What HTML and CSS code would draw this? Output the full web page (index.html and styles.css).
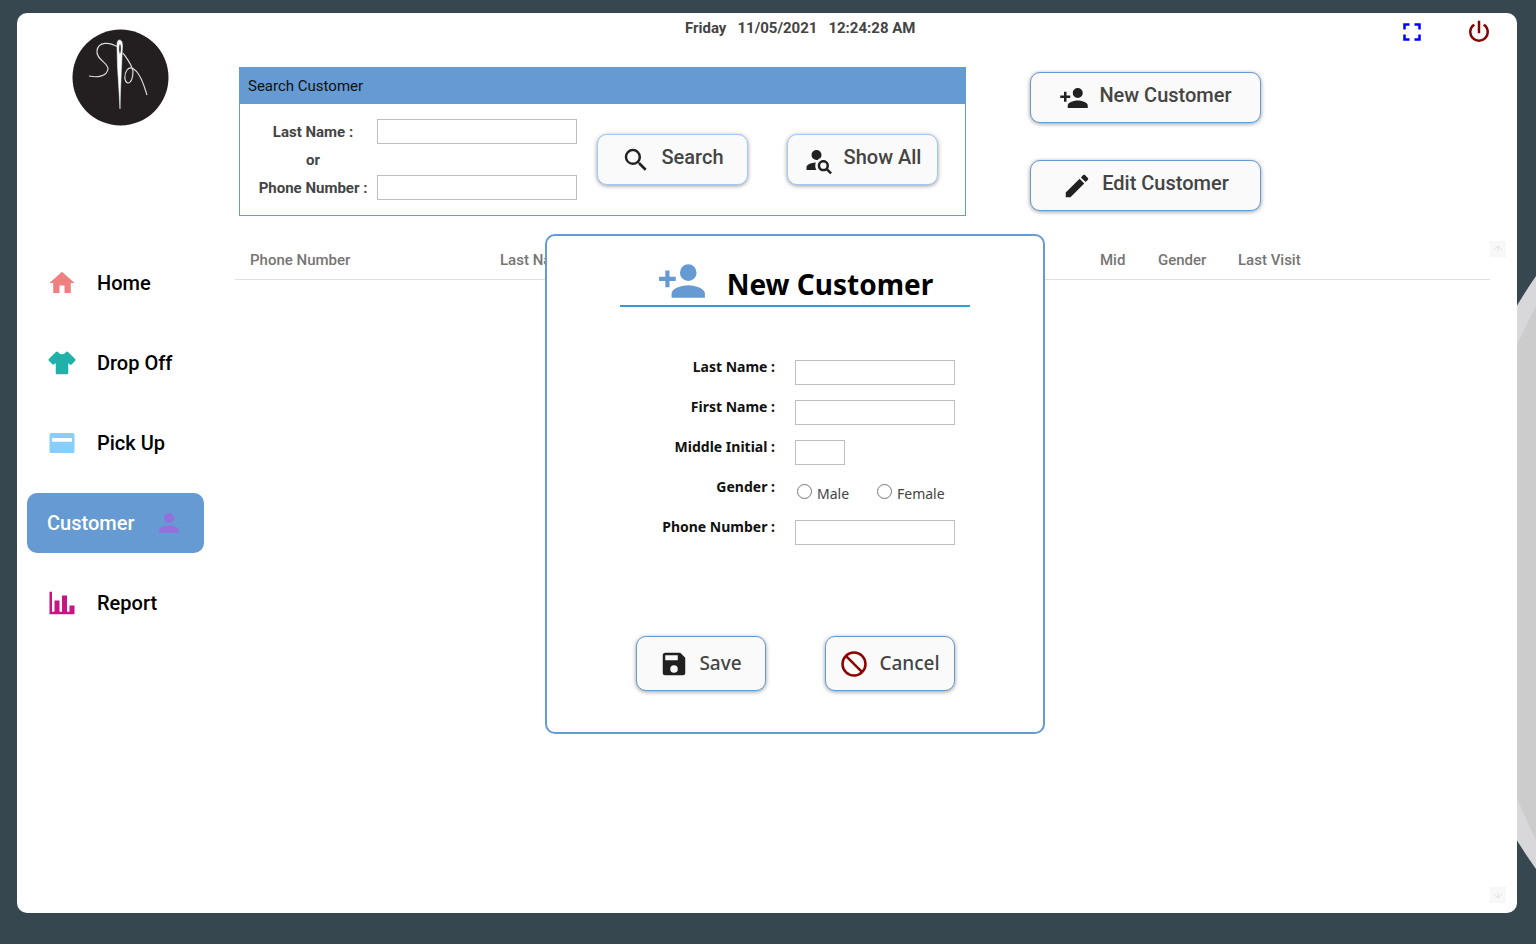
FILE: index.html
```html
<!DOCTYPE html>
<html lang="en">
<head>
<meta charset="utf-8">
<title>Customer</title>
<link rel="stylesheet" href="styles.css">
</head>
<body>
<svg class="backdrop" viewBox="0 0 40 944" aria-hidden="true">
  <path class="backdrop-outer" d="M40 276A502 502 0 0 0 0 345V803A502 502 0 0 0 40 869Z"/>
  <path class="backdrop-inner" d="M40 306A600 600 0 0 0 21 345V798A600 600 0 0 0 40 840Z"/>
</svg>
<div class="panel">
  <aside class="sidebar">
    <svg class="logo" viewBox="0 0 97 97" role="img" aria-label="Needle and thread logo">
      <circle cx="48.500" cy="48.500" r="48" fill="#231f20"/>
      <path d="M46 18C38 13 26 12 25 22C24 31 36 33 36 40C35 47 26 49 17 47M51 24C56 31 60 36 61 42C61 49 59 54 56 54C52 53 52 45 55 41C59 36 64 41 67 46C71 52 73 60 75 66" fill="none" stroke="#ddd" stroke-width="1.200"/>
      <path fill-rule="evenodd" d="M47.500 11C49.500 11 50.500 13 50.500 17L49.500 38L48.500 62L48 80L47 62L45.500 38L45 17C45 13 45.500 11 47.500 11ZM48 15C46.500 15 46.500 24 48 25C49.500 24 49.500 15 48 15Z" fill="#fff" stroke="#fff" stroke-width=".5"/>
    </svg>
    <nav class="nav">
      <a class="nav-item" href="#home"><svg class="icon home" viewBox="0 0 24 24"><path d="M10,20V14H14V20H19V12H22L12,3L2,12H5V20H10Z"/></svg><span>Home</span></a>
      <a class="nav-item" href="#drop-off"><svg class="icon shirt" viewBox="0 0 24 24"><path d="M16,21H8A1,1 0 0,1 7,20V12.07L5.7,13.07C5.31,13.46 4.68,13.46 4.29,13.07L1.46,10.29C1.07,9.9 1.07,9.27 1.46,8.88L7.34,3H9C9,4.1 10.34,5 12,5C13.66,5 15,4.1 15,3H16.66L22.54,8.88C22.93,9.27 22.93,9.9 22.54,10.29L19.71,13.12C19.32,13.5 18.69,13.5 18.3,13.12L17,12.12V20A1,1 0 0,1 16,21"/></svg><span>Drop Off</span></a>
      <a class="nav-item" href="#pick-up"><svg class="icon card" viewBox="0 0 24 24"><path fill-rule="evenodd" d="M3.500,4H20.500A1.500,1.500 0 0,1 22,5.500V18.500A1.500,1.500 0 0,1 20.500,20H3.500A1.500,1.500 0 0,1 2,18.500V5.500A1.500,1.500 0 0,1 3.500,4M4,8V11H20V8Z"/></svg><span>Pick Up</span></a>
      <a class="nav-item active" href="#customer" aria-current="page"><span>Customer</span><svg class="icon person" viewBox="0 0 24 24"><path d="M12,4A4,4 0 0,1 16,8A4,4 0 0,1 12,12A4,4 0 0,1 8,8A4,4 0 0,1 12,4M12,14C16.42,14 20,15.79 20,18V20H4V18C4,15.79 7.58,14 12,14Z"/></svg></a>
      <a class="nav-item" href="#report"><svg class="icon chart" viewBox="0 0 24 24"><path d="M22,21H2V3H4V19H6V10H10V19H12V6H16V19H18V14H22V21Z"/></svg><span>Report</span></a>
    </nav>
  </aside>
  <main class="main">
    <header class="topbar">
      <div class="clock"><span>Friday</span><span>11/05/2021</span><span>12:24:28 AM</span></div>
      <div class="window-actions">
        <button class="icon-button" aria-label="Full screen"><svg class="icon expand" viewBox="0 0 24 24"><path d="M5,5H10V7H7V10H5V5M14,5H19V10H17V7H14V5M17,14H19V19H14V17H17V14M10,17V19H5V14H7V17H10Z"/></svg></button>
        <button class="icon-button" aria-label="Log out"><svg class="icon power" viewBox="0 0 24 24"><path d="M16.56,5.44L15.11,6.89C16.84,7.94 18,9.83 18,12A6,6 0 0,1 12,18A6,6 0 0,1 6,12C6,9.83 7.16,7.94 8.88,6.88L7.44,5.44C5.36,6.88 4,9.28 4,12A8,8 0 0,0 12,20A8,8 0 0,0 20,12C20,9.28 18.64,6.88 16.56,5.44M13,3H11V13H13"/></svg></button>
      </div>
    </header>
    <div class="tools">
      <section class="search">
        <h2 class="search-title">Search Customer</h2>
        <form class="search-body">
          <div class="search-fields">
            <label for="s-last">Last Name :</label><input class="field" id="s-last" type="text">
            <span>or</span><span></span>
            <label for="s-phone">Phone Number :</label><input class="field" id="s-phone" type="text">
          </div>
          <div class="search-buttons">
            <button class="button light" type="button"><svg class="icon" viewBox="0 0 24 24"><path d="M9.5,3A6.5,6.5 0 0,1 16,9.5C16,11.11 15.41,12.59 14.44,13.73L14.71,14H15.5L20.5,19L19,20.5L14,15.5V14.71L13.73,14.44C12.59,15.41 11.11,16 9.5,16A6.5,6.5 0 0,1 3,9.5A6.5,6.5 0 0,1 9.5,3M9.5,5C7,5 5,7 5,9.5C5,12 7,14 9.5,14C12,14 14,12 14,9.5C14,7 12,5 9.5,5Z"/></svg><span>Search</span></button>
            <button class="button light" type="button"><svg class="icon" viewBox="0 0 24 24"><path d="M15.5,12C18,12 20,14 20,16.5C20,17.38 19.75,18.21 19.31,18.9L22.39,22L21,23.39L17.88,20.32C17.19,20.75 16.37,21 15.5,21C13,21 11,19 11,16.5C11,14 13,12 15.5,12M15.5,14A2.5,2.5 0 0,0 13,16.5A2.5,2.5 0 0,0 15.5,19A2.5,2.5 0 0,0 18,16.5A2.5,2.5 0 0,0 15.5,14M10,4A4,4 0 0,1 14,8C14,8.91 13.69,9.75 13.18,10.43C12.32,10.75 11.55,11.26 10.91,11.9L10,12A4,4 0 0,1 6,8A4,4 0 0,1 10,4M2,20V18C2,15.88 5.31,14.14 9.5,14C9.18,14.78 9,15.62 9,16.5C9,17.79 9.38,19 10,20H2Z"/></svg><span>Show All</span></button>
          </div>
        </form>
      </section>
      <div class="actions">
        <button class="button" type="button"><svg class="icon" viewBox="0 0 24 24"><path d="M15,14C12.33,14 7,15.33 7,18V20H23V18C23,15.33 17.67,14 15,14M6,10V7H4V10H1V12H4V15H6V12H9V10M15,12A4,4 0 0,0 19,8A4,4 0 0,0 15,4A4,4 0 0,0 11,8A4,4 0 0,0 15,12Z"/></svg><span>New Customer</span></button>
        <button class="button" type="button"><svg class="icon" viewBox="0 0 24 24"><path d="M20.71,7.04C21.1,6.65 21.1,6 20.71,5.63L18.37,3.29C18,2.9 17.35,2.9 16.96,3.29L15.12,5.12L18.87,8.87M3,17.25V21H6.75L17.81,9.93L14.06,6.18L3,17.25Z"/></svg><span>Edit Customer</span></button>
      </div>
    </div>
    <div class="results">
      <div class="table-wrap">
        <table class="table">
          <colgroup><col class="c-phone"><col class="c-name"><col class="c-name"><col class="c-mid"><col class="c-gender"><col></colgroup>
          <thead><tr><th>Phone Number</th><th>Last Name</th><th></th><th>Mid</th><th>Gender</th><th>Last Visit</th></tr></thead>
        </table>
      </div>
      <div class="scrollbar">
        <button class="scroll-arrow" aria-label="Scroll up"><svg viewBox="0 0 16 16"><path d="M4 9L8 5L12 9M8 5V11"/></svg></button>
        <button class="scroll-arrow" aria-label="Scroll down"><svg viewBox="0 0 16 16"><path d="M4 7L8 11L12 7M8 11V5"/></svg></button>
      </div>
    </div>
  </main>
  <section class="dialog" role="dialog" aria-labelledby="dialog-title">
    <header class="dialog-header">
      <svg class="icon large" viewBox="0 0 24 24"><path d="M15,14C12.33,14 7,15.33 7,18V20H23V18C23,15.33 17.67,14 15,14M6,10V7H4V10H1V12H4V15H6V12H9V10M15,12A4,4 0 0,0 19,8A4,4 0 0,0 15,4A4,4 0 0,0 11,8A4,4 0 0,0 15,12Z"/></svg>
      <h1 id="dialog-title">New Customer</h1>
    </header>
    <form class="form">
      <label class="form-label" for="last">Last Name :</label><input class="field" id="last" type="text">
      <label class="form-label" for="first">First Name :</label><input class="field" id="first" type="text">
      <label class="form-label" for="middle">Middle Initial :</label><input class="field short" id="middle" type="text">
      <span class="form-label" id="gender">Gender :</span>
      <div class="radios" role="radiogroup" aria-labelledby="gender">
        <label><input type="radio" name="gender"><span>Male</span></label>
        <label><input type="radio" name="gender"><span>Female</span></label>
      </div>
      <label class="form-label" for="phone">Phone Number :</label><input class="field" id="phone" type="text">
    </form>
    <footer class="dialog-footer">
      <button class="button" type="button"><svg class="icon" viewBox="0 0 24 24"><path d="M15,9H5V5H15M12,19A3,3 0 0,1 9,16A3,3 0 0,1 12,13A3,3 0 0,1 15,16A3,3 0 0,1 12,19M17,3H5C3.89,3 3,3.9 3,5V19A2,2 0 0,0 5,21H19A2,2 0 0,0 21,19V7L17,3Z"/></svg><span>Save</span></button>
      <button class="button" type="button"><svg class="icon cancel" viewBox="0 0 24 24"><circle cx="12" cy="12" r="9.200"/><path d="M5.500 5.500L18.500 18.500"/></svg><span>Cancel</span></button>
    </footer>
  </section>
</div>
</body>
</html>
```
FILE: styles.css
```css
* { box-sizing: border-box; }

body {
  margin: 0;
  min-height: 100vh;
  padding: 13px 19px 31px 17px;
  display: flex;
  background: #37474f;
  font-family: Roboto, "Liberation Sans", sans-serif;
  color: #444;
}

h1, h2 { margin: 0; }
button, input { font: inherit; color: inherit; }
button { cursor: pointer; }

.backdrop {
  position: absolute;
  top: 0;
  right: 0;
  width: 40px;
  height: 944px;
}
.backdrop-outer { fill: #d8d8da; }
.backdrop-inner { fill: #ccc; }

.panel {
  position: relative;
  flex: 1;
  display: flex;
  background: #fff;
  border-radius: 10px;
}

.icon {
  flex: none;
  display: block;
  width: 30px;
  height: 30px;
  fill: #212121;
}
.icon.large { width: 50px; height: 50px; fill: #659ad2; }
.icon.home { fill: #f08080; }
.icon.shirt { fill: #20b2aa; }
.icon.card { fill: #87cefa; }
.icon.person { fill: #9370db; }
.icon.chart { fill: #c71585; }
.icon.expand { fill: #00f; }
.icon.power { fill: #8b0000; }
.icon.cancel { fill: none; stroke: #8b0000; stroke-width: 2; }

/* Sidebar */
.sidebar {
  flex: none;
  width: 218px;
  padding: 16px 31px 0 10px;
}
.logo {
  display: block;
  width: 97px;
  height: 97px;
  margin: 0 0 127px 45px;
}
.nav { display: flex; flex-direction: column; gap: 20px; }
.nav-item {
  display: flex;
  align-items: center;
  gap: 20px;
  height: 60px;
  padding: 0 20px;
  border-radius: 10px;
  font-size: 20px;
  font-weight: 500;
  color: #000;
  text-decoration: none;
}
.nav-item.active {
  justify-content: space-between;
  background: #659ad2;
  color: #fff;
}

/* Main column */
.main {
  flex: 1;
  min-width: 0;
  display: flex;
  flex-direction: column;
  padding-right: 11px;
}
.topbar {
  display: flex;
  justify-content: space-between;
  align-items: flex-start;
  height: 54px;
  padding: 4px 12px 0 450px;
}
.clock {
  display: flex;
  gap: 11px;
  line-height: 23px;
  font-size: 15px;
  font-weight: 700;
}
.window-actions { display: flex; gap: 37px; }
.icon-button { padding: 0; border: 0; background: none; }

.tools {
  display: flex;
  align-items: flex-start;
  gap: 64px;
  padding-left: 4px;
}
.search { width: 727px; border: 1px solid #659ad2; }
.search-title {
  padding: 0 8px;
  line-height: 36px;
  background: #659ad2;
  color: #111;
  font-size: 15px;
  font-weight: 400;
}
.search-body {
  display: flex;
  align-items: center;
  justify-content: space-between;
  padding: 15px 27px 15px 15px;
}
.search-fields {
  display: grid;
  grid-template-columns: 116px 200px;
  grid-template-rows: 25px 31px 25px;
  column-gap: 6px;
  align-items: center;
  justify-items: center;
  font-size: 15px;
  font-weight: 700;
}
.search-buttons { display: flex; gap: 39px; }
.search-buttons .button { width: 151px; }

.field {
  width: 100%;
  height: 25px;
  padding: 0 4px;
  border: 1px solid #bebec2;
  background: #fff;
}
.field.short { width: 50px; }

.button {
  display: flex;
  align-items: center;
  justify-content: center;
  gap: 10px;
  height: 51px;
  padding: 0;
  background: #fafafa;
  border: 1px solid #659ad2;
  border-radius: 10px;
  box-shadow: 0 1px 4px rgba(0, 0, 0, 0.4);
  font-size: 20px;
  font-weight: 500;
}
.button.light { border-color: #a0c8fa; }
.button span { padding-bottom: 5px; }

.actions {
  display: flex;
  flex-direction: column;
  gap: 37px;
  width: 231px;
  padding-top: 5px;
}

/* Results */
.results { flex: 1; display: flex; padding-top: 25px; }
.table-wrap { flex: 1; }
.table { width: 100%; border-collapse: collapse; table-layout: fixed; }
.table th {
  height: 38px;
  padding: 0 0 0 15px;
  border-bottom: 1px solid #e0e0e0;
  text-align: left;
  font-size: 15px;
  font-weight: 500;
  color: #757575;
}
.c-phone { width: 250px; }
.c-name { width: 300px; }
.c-mid { width: 58px; }
.c-gender { width: 80px; }
.scrollbar {
  display: flex;
  flex-direction: column;
  justify-content: space-between;
  padding-bottom: 10px;
}
.scroll-arrow { padding: 0; border: 0; background: #f8f8f8; }
.scroll-arrow svg {
  display: block;
  width: 16px;
  height: 16px;
  fill: none;
  stroke: #e4e4e4;
}

/* Dialog */
.dialog {
  position: absolute;
  top: 221px;
  left: 528px;
  width: 500px;
  padding: 20px 73px 41px;
  background: #fff;
  border: 2px solid #659ad2;
  border-radius: 10px;
  font-family: "Noto Sans", "Open Sans", sans-serif;
}
.dialog-header {
  display: flex;
  justify-content: center;
  align-items: flex-start;
  gap: 20px;
  height: 51px;
  border-bottom: 2px solid #3498db;
}
.dialog-header h1 {
  line-height: 56px;
  font-size: 28px;
  font-weight: 700;
  color: #000;
}
.form {
  display: grid;
  grid-template-columns: 155px 160px;
  grid-auto-rows: 40px;
  column-gap: 20px;
  margin-top: 53px;
}
.form-label {
  text-align: right;
  line-height: 14px;
  font-size: 14px;
  font-weight: 700;
  color: #111;
}
.radios {
  display: grid;
  grid-template-columns: 80px 80px;
  align-items: start;
  font-size: 14px;
  line-height: 27px;
}
.radios label { display: flex; align-items: flex-start; gap: 5px; }
.radios input {
  appearance: none;
  width: 15px;
  height: 15px;
  margin: 4px 0 0 2px;
  border: 1px solid #767676;
  border-radius: 50%;
}
.dialog-footer {
  display: flex;
  justify-content: center;
  gap: 59px;
  margin-top: 76px;
}
.dialog-footer .button {
  width: 130px;
  height: 55px;
  font-size: 19px;
}
.dialog-footer .button span { padding-bottom: 2px; }
```
